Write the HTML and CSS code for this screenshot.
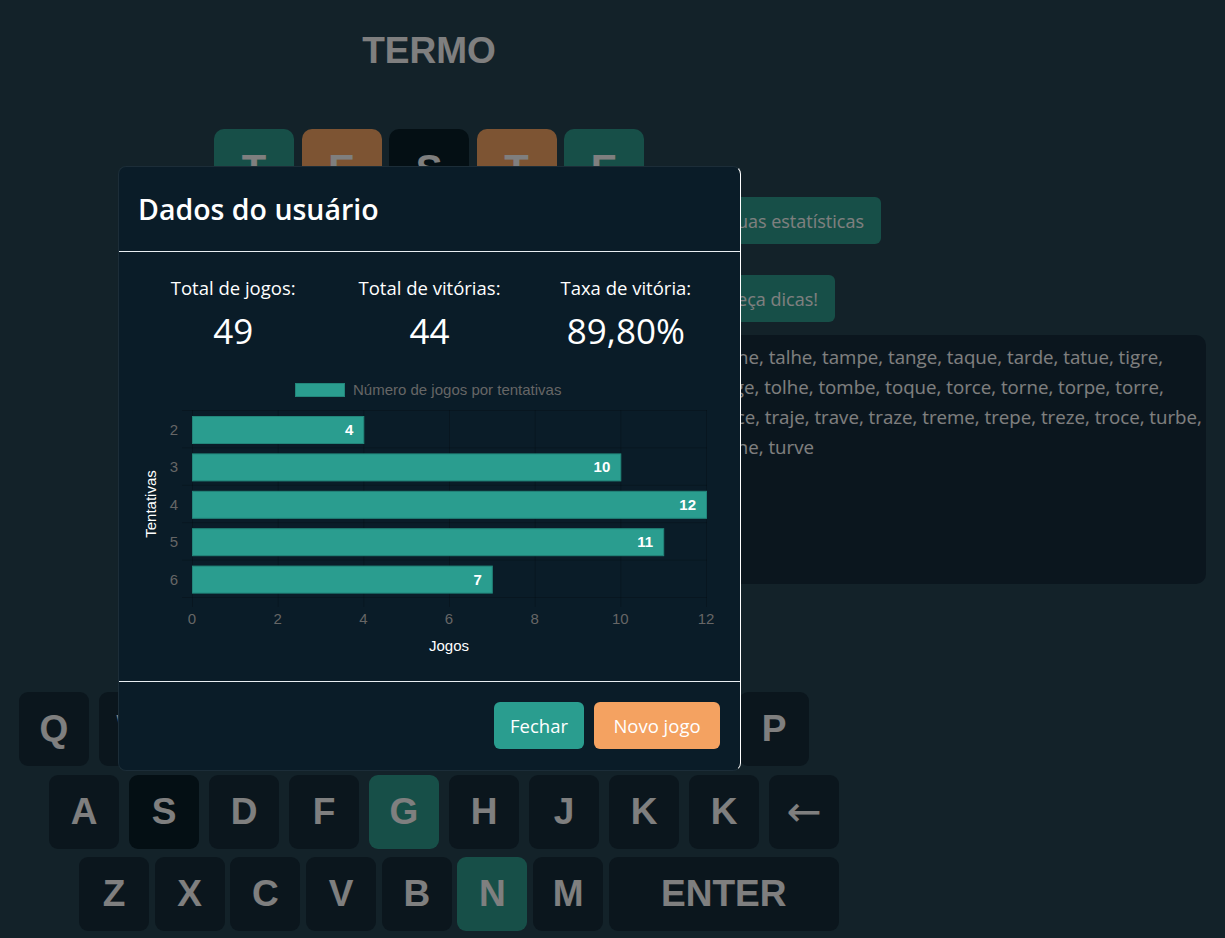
FILE: index.html
```html
<!DOCTYPE html>
<html lang="pt-BR">
<head>
<meta charset="utf-8">
<title>Termo</title>
<link rel="stylesheet" href="styles.css">
</head>
<body>
<div class="page">
  <h1 class="title">TERMO</h1>

  <div class="board">
    <div class="board-row">
      <div class="tile correct">T</div>
      <div class="tile present">E</div>
      <div class="tile absent">S</div>
      <div class="tile present">T</div>
      <div class="tile correct">E</div>
    </div>
    <div class="board-row"><div class="tile"></div><div class="tile"></div><div class="tile"></div><div class="tile"></div><div class="tile"></div></div>
    <div class="board-row"><div class="tile"></div><div class="tile"></div><div class="tile"></div><div class="tile"></div><div class="tile"></div></div>
    <div class="board-row"><div class="tile"></div><div class="tile"></div><div class="tile"></div><div class="tile"></div><div class="tile"></div></div>
    <div class="board-row"><div class="tile"></div><div class="tile"></div><div class="tile"></div><div class="tile"></div><div class="tile"></div></div>
    <div class="board-row"><div class="tile"></div><div class="tile"></div><div class="tile"></div><div class="tile"></div><div class="tile"></div></div>
  </div>

  <aside class="side">
    <button class="side-btn stats-btn">Ver suas estatísticas</button>
    <button class="side-btn hint-btn">Peça dicas!</button>
    <div class="words">
      <span class="word-line">tache, talhe, tampe, tange, taque, tarde, tatue, tigre,</span>
      <span class="word-line">tinge, tolhe, tombe, toque, torce, torne, torpe, torre,</span>
      <span class="word-line">trace, traje, trave, traze, treme, trepe, treze, troce, turbe,</span>
      <span class="word-line">turne, turve</span>
    </div>
  </aside>

  <div class="keyboard">
    <div class="kb-row row-1">
      <div class="key">Q</div><div class="key">W</div><div class="key">E</div><div class="key">R</div><div class="key">T</div>
      <div class="key">Y</div><div class="key">U</div><div class="key">I</div><div class="key">O</div><div class="key">P</div>
    </div>
    <div class="kb-row row-2">
      <div class="key">A</div><div class="key absent">S</div><div class="key">D</div><div class="key">F</div><div class="key correct">G</div>
      <div class="key">H</div><div class="key">J</div><div class="key">K</div><div class="key">K</div><div class="key arrow">←</div>
    </div>
    <div class="kb-row row-3">
      <div class="key">Z</div><div class="key">X</div><div class="key">C</div><div class="key">V</div><div class="key">B</div>
      <div class="key correct">N</div><div class="key">M</div><div class="key enter">ENTER</div>
    </div>
  </div>
</div>

<div class="backdrop"></div>

<div class="modal">
  <div class="modal-header">
    <h2 class="modal-title">Dados do usuário</h2>
  </div>
  <div class="modal-body">
    <div class="stats">
      <div class="stat">
        <div class="stat-label">Total de jogos:</div>
        <div class="stat-value">49</div>
      </div>
      <div class="stat">
        <div class="stat-label">Total de vitórias:</div>
        <div class="stat-value">44</div>
      </div>
      <div class="stat">
        <div class="stat-label">Taxa de vitória:</div>
        <div class="stat-value">89,80%</div>
      </div>
    </div>
    <svg class="chart" width="590" height="290" viewBox="0 0 590 290">
      <!-- legend -->
      <rect class="bar" x="160.5" y="11.5" width="49" height="13"/>
      <text class="legend-text" x="218" y="23">Número de jogos por tentativas</text>

      <!-- grid -->
      <g class="grid">
        <line x1="57.5" y1="38" x2="57.5" y2="235"/>
        <line x1="143.17" y1="38" x2="143.17" y2="235"/>
        <line x1="228.83" y1="38" x2="228.83" y2="235"/>
        <line x1="314.5" y1="38" x2="314.5" y2="235"/>
        <line x1="400.17" y1="38" x2="400.17" y2="235"/>
        <line x1="485.83" y1="38" x2="485.83" y2="235"/>
        <line x1="571.5" y1="38" x2="571.5" y2="235"/>
        <line x1="47" y1="38.5" x2="572" y2="38.5"/>
        <line x1="47" y1="75.9" x2="572" y2="75.9"/>
        <line x1="47" y1="113.3" x2="572" y2="113.3"/>
        <line x1="47" y1="150.7" x2="572" y2="150.7"/>
        <line x1="47" y1="188.1" x2="572" y2="188.1"/>
        <line x1="47" y1="225.5" x2="572" y2="225.5"/>
      </g>

      <!-- bars -->
      <rect class="bar" x="57.5" y="44.5" width="171.3" height="27"/>
      <rect class="bar" x="57.5" y="81.9" width="428.3" height="27"/>
      <rect class="bar" x="57.5" y="119.3" width="514" height="27"/>
      <rect class="bar" x="57.5" y="156.7" width="471.2" height="27"/>
      <rect class="bar" x="57.5" y="194.1" width="299.8" height="27"/>

      <!-- data labels -->
      <g class="data-label">
        <text x="218.3" y="63">4</text>
        <text x="475.3" y="100.4">10</text>
        <text x="561" y="137.8">12</text>
        <text x="518.2" y="175.2">11</text>
        <text x="346.8" y="212.6">7</text>
      </g>

      <!-- y ticks -->
      <g class="tick tick-y">
        <text x="43" y="63">2</text>
        <text x="43" y="100.4">3</text>
        <text x="43" y="137.8">4</text>
        <text x="43" y="175.2">5</text>
        <text x="43" y="212.6">6</text>
      </g>

      <!-- x ticks -->
      <g class="tick tick-x">
        <text x="57" y="252">0</text>
        <text x="142.67" y="252">2</text>
        <text x="228.33" y="252">4</text>
        <text x="314" y="252">6</text>
        <text x="399.67" y="252">8</text>
        <text x="485.33" y="252">10</text>
        <text x="571" y="252">12</text>
      </g>

      <text class="axis-title" x="314" y="279">Jogos</text>
      <text class="axis-title" transform="translate(21 132) rotate(-90)">Tentativas</text>
    </svg>
  </div>
  <div class="modal-footer">
    <button class="btn btn-close">Fechar</button>
    <button class="btn btn-new">Novo jogo</button>
  </div>
</div>
</body>
</html>
```

FILE: styles.css
```css
* { box-sizing: border-box; }

html, body {
  margin: 0;
  padding: 0;
  height: 100%;
  overflow: hidden;
}

body {
  background: #264452;
  font-family: "Open Sans", "Noto Sans", sans-serif;
  color: #fff;
}

.page {
  display: grid;
  grid-template-columns: 214px 430px 1fr;
  grid-template-areas:
    ". title ."
    ". board side"
    "kb kb kb";
  align-items: start;
}

.title {
  grid-area: title;
  margin: 0;
  padding-top: 30px;
  font-family: "Liberation Sans", Arial, sans-serif;
  font-weight: 700;
  font-size: 37px;
  line-height: 42px;
  text-align: center;
  color: #fff;
}

.board {
  grid-area: board;
  margin-top: 57px;
  display: flex;
  flex-direction: column;
  gap: 8px;
}

.board-row {
  display: flex;
  gap: 7.5px;
}

.tile {
  width: 80px;
  height: 80px;
  border-radius: 10px;
  background: #162c3a;
  display: flex;
  align-items: center;
  justify-content: center;
  font-family: "Liberation Sans", Arial, sans-serif;
  font-weight: 700;
  font-size: 40px;
  color: #fff;
}

.tile.correct { background: #2e9f90; }
.tile.present { background: #faa866; }
.tile.absent { background: #081e28; }

.side {
  grid-area: side;
  margin-left: 40px;
  padding-top: 125px;
  display: flex;
  flex-direction: column;
  align-items: flex-start;
}

.side-btn {
  border: none;
  border-radius: 6px;
  background: #2e9f90;
  color: #fff;
  font-family: "Open Sans", "Noto Sans", sans-serif;
  font-size: 18px;
  height: 47px;
  padding: 0 17px;
  display: flex;
  align-items: center;
  justify-content: flex-end;
  white-space: nowrap;
}

.stats-btn { width: 197px; }
.hint-btn { width: 126px; margin-left: 25px; margin-top: 31px; }

.words {
  margin-top: 13px;
  margin-left: 16px;
  width: 506px;
  height: 249px;
  border-radius: 10px;
  background: #162c3c;
  padding: 7px 8px 7px 11px;
  font-size: 18.7px;
  line-height: 30px;
  color: #fff;
}

.word-line {
  display: block;
  white-space: nowrap;
}

.keyboard {
  grid-area: kb;
  margin-top: 43px;
  display: flex;
  flex-direction: column;
  gap: 8.5px;
}

.kb-row {
  display: flex;
  gap: 10px;
}

.row-1 { margin-left: 19px; }
.row-2 { margin-left: 49px; }
.row-3 { margin-left: 79px; gap: 5.7px; }

.key {
  width: 70px;
  height: 74px;
  border-radius: 9px;
  background: #162c3a;
  display: flex;
  align-items: center;
  justify-content: center;
  font-family: "Liberation Sans", Arial, sans-serif;
  font-weight: 700;
  font-size: 37px;
  color: #fff;
}

.key.absent { background: #081e28; }
.key.correct { background: #2e9f90; }
.key.enter { width: 230px; }
.key.arrow {
  font-family: "DejaVu Sans", sans-serif;
  font-weight: 400;
  font-size: 42px;
}

.backdrop {
  position: fixed;
  inset: 0;
  background: rgba(0, 0, 0, 0.5);
}

.modal {
  position: fixed;
  left: 118px;
  top: 166px;
  width: 623px;
  background: #0a1c28;
  border: 1px solid #1c2d38;
  border-right-color: #ffffff;
  border-radius: 8px;
  display: flex;
  flex-direction: column;
}

.modal-header {
  height: 85px;
  padding: 0 19px;
  display: flex;
  align-items: center;
  border-bottom: 1px solid #e8eef2;
}

.modal-title {
  margin: 0;
  font-size: 28.5px;
  font-weight: 600;
  line-height: 1.2;
  color: #fff;
}

.modal-body {
  padding: 23px 16px 19px;
}

.stats {
  display: grid;
  grid-template-columns: 1fr 1fr 1fr;
  text-align: center;
}

.stat-label {
  font-size: 18.5px;
  line-height: 26px;
}

.stat-value {
  margin-top: 8px;
  font-size: 35px;
  font-weight: 400;
  line-height: 44px;
}

.chart {
  display: block;
  margin-top: 19px;
  font-family: "Liberation Sans", Arial, sans-serif;
}

.chart .bar {
  fill: #2a9d8f;
  stroke: #22857a;
  stroke-width: 1;
}

.chart .legend-text {
  font-size: 15px;
  fill: #666;
}

.chart .grid line {
  stroke: rgba(0, 0, 0, 0.18);
  stroke-width: 1;
}

.chart .data-label text {
  font-size: 15px;
  font-weight: 700;
  fill: #fff;
  text-anchor: end;
}

.chart .tick text {
  font-size: 15px;
  fill: #666;
}

.chart .tick-y text { text-anchor: end; }
.chart .tick-x text { text-anchor: middle; }

.chart .axis-title {
  font-size: 15px;
  fill: #fff;
  text-anchor: middle;
}

.modal-footer {
  border-top: 1px solid #e8eef2;
  padding: 20px 20px 21px;
  display: flex;
  justify-content: flex-end;
  gap: 10px;
}

.btn {
  border: none;
  border-radius: 6px;
  height: 47px;
  padding: 0 16px;
  font-family: "Open Sans", "Noto Sans", sans-serif;
  font-size: 18.5px;
  color: #fff;
}

.btn-close { background: #2a9d8f; width: 90px; }
.btn-new { background: #f4a261; width: 126px; }
```
